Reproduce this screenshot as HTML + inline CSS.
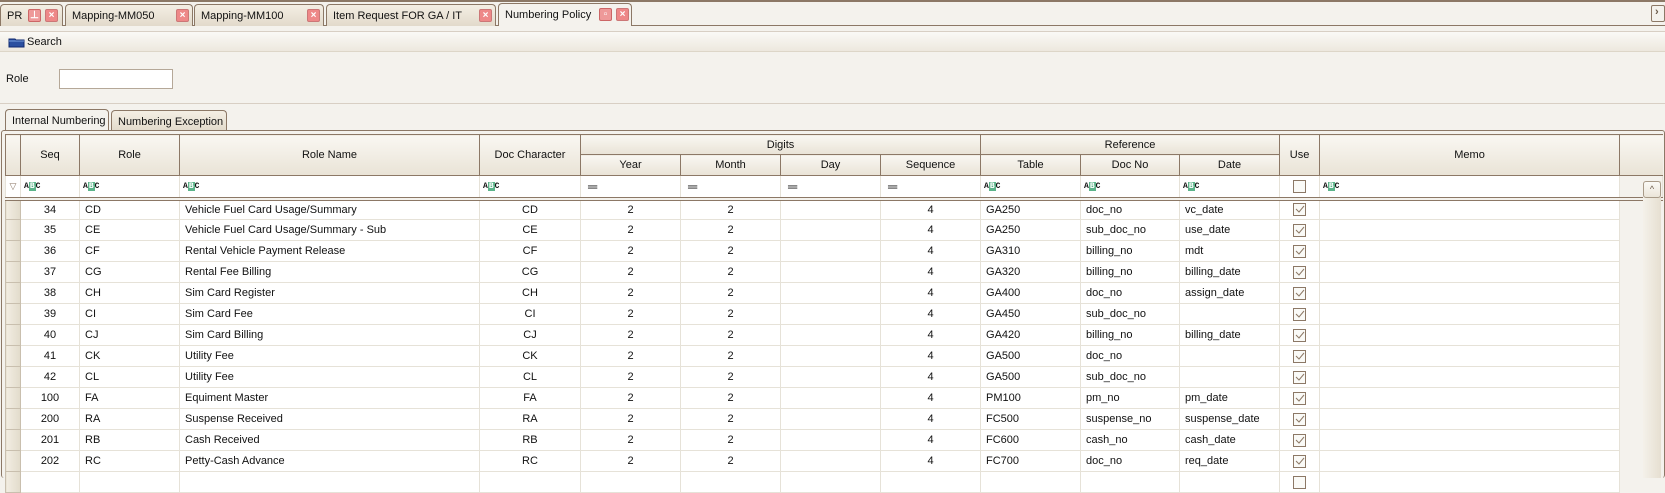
<!DOCTYPE html>
<html><head><meta charset="utf-8">
<style>
*{box-sizing:border-box;margin:0;padding:0}
body{width:1665px;height:478px;overflow:hidden;background:#f4f2ed;font-family:"Liberation Sans",Arial,sans-serif;font-size:11px;color:#111;position:relative}
.abs{position:absolute}
.tab{position:absolute;top:4px;height:22px;border:1px solid #8c7866;border-bottom:none;border-radius:4px 4px 0 0;background:linear-gradient(#f4efe4,#e2dacb);padding:5px 0 0 6px;font-size:11px;white-space:nowrap}
.x{position:absolute;top:4px;width:13px;height:13px;border:1px solid #c77;background:#e88;border-radius:2px;color:#fff;font-size:10px;line-height:11px;text-align:center;font-weight:bold}
table{position:absolute;left:5px;top:134px;border-collapse:collapse;table-layout:fixed;width:1657px}
td,th{border:1px solid #e6e2d8;padding:0;overflow:hidden;white-space:nowrap;font-weight:normal}
th{border:1px solid #8c7866;background:linear-gradient(#f9f7f2,#e9e3d6);text-align:center}
tr.d{height:21px}
tr.d td{background:#fff}
td.rh{background:linear-gradient(90deg,#f2ede2,#e2dbcb)!important;border-color:#c9bfae}
.c{text-align:center}.l{padding-left:5px}
.abc{font-size:8px;font-family:"Liberation Mono",monospace;font-weight:bold;padding-left:3px}
.abc b{background:#5cb48a;color:#fff;padding:0 1px}
.eq{padding-left:7px;font-weight:bold;font-size:13px}
.cb{display:inline-block;width:13px;height:13px;border:1px solid #8c7866;vertical-align:middle;background:#fafaf7}
</style></head><body>
<div class="abs" style="left:0;top:0;width:1665px;height:2px;background:#8c7866"></div>
<div class="abs" style="left:0;top:25px;width:1665px;height:1px;background:#8c7866"></div>
<div class="tab" style="left:0;width:63px">PR<span class="x" style="left:27px;background:#e99;border-color:#c66">⊥</span><span class="x" style="left:44px">×</span></div>
<div class="tab" style="left:65px;width:128px">Mapping-MM050<span class="x" style="left:110px">×</span></div>
<div class="tab" style="left:194px;width:130px">Mapping-MM100<span class="x" style="left:112px">×</span></div>
<div class="tab" style="left:326px;width:170px">Item Request FOR GA / IT<span class="x" style="left:152px">×</span></div>
<div class="tab" style="left:498px;width:134px;height:23px;background:#f4f2ed;top:3px">Numbering Policy<span class="x" style="left:100px;background:#e99;border-color:#c66">▫</span><span class="x" style="left:117px">×</span></div>
<div class="abs" style="left:1651px;top:5px;width:14px;height:17px;border:1px solid #8c7866;border-radius:2px;font-size:11px;font-weight:bold;color:#6a5a4a;padding-left:3px">›</div>
<div class="abs" style="left:0;top:31px;width:1665px;height:1px;background:#d8cfc4"></div>
<div class="abs" style="left:0;top:32px;width:1665px;height:20px;background:linear-gradient(#faf9f6,#ede8de);border-bottom:1px solid #ddd6c8;padding:4px 0 0 27px">Search</div>
<svg class="abs" style="left:8px;top:36px" width="17" height="12"><path d="M1 3h6l1 1h8v7H1z" fill="#2b4fa0" stroke="#102a70"/><path d="M1 5h15" stroke="#7aa0e0"/></svg>
<div class="abs" style="left:6px;top:73px">Role</div>
<div class="abs" style="left:59px;top:69px;width:114px;height:20px;background:#fff;border:1px solid #b5a898"></div>
<div class="abs" style="left:0;top:103px;width:1665px;height:1px;background:#d8cfc4"></div>
<div class="tab" style="left:5px;top:109px;width:104px;height:22px;background:#f4f2ed">Internal Numbering</div>
<div class="tab" style="left:111px;top:110px;width:116px;height:21px">Numbering Exception</div>
<div class="abs" style="left:1px;top:130px;width:1664px;height:348px;border:1px solid #8c7866;border-bottom:none;border-radius:3px"></div>
<table>
<colgroup><col style="width:15px"><col style="width:59px"><col style="width:100px"><col style="width:300px"><col style="width:101px"><col style="width:100px"><col style="width:100px"><col style="width:100px"><col style="width:100px"><col style="width:100px"><col style="width:99px"><col style="width:100px"><col style="width:40px"><col style="width:300px"><col style="width:43px"></colgroup>
<tr style="height:20px"><th rowspan="2"></th><th rowspan="2">Seq</th><th rowspan="2">Role</th><th rowspan="2">Role Name</th><th rowspan="2">Doc Character</th><th colspan="4">Digits</th><th colspan="3">Reference</th><th rowspan="2">Use</th><th rowspan="2">Memo</th><th rowspan="2" style="border-right:none"></th></tr>
<tr style="height:21px"><th>Year</th><th>Month</th><th>Day</th><th>Sequence</th><th>Table</th><th>Doc No</th><th>Date</th></tr>
<tr class="d" style="height:23px;border-bottom:4px double #8c7866"><td style="color:#8c7866;font-size:9px;text-align:center">▽</td><td class="abc">A<b>B</b>C</td><td class="abc">A<b>B</b>C</td><td class="abc">A<b>B</b>C</td><td class="abc">A<b>B</b>C</td><td class="eq">═</td><td class="eq">═</td><td class="eq">═</td><td class="eq">═</td><td class="abc">A<b>B</b>C</td><td class="abc">A<b>B</b>C</td><td class="abc">A<b>B</b>C</td><td class="c"><span class="cb"></span></td><td class="abc">A<b>B</b>C</td><td style="background:#f4f2ed"></td></tr>
<tr class="d"><td class="rh"></td><td class="c">34</td><td class="l">CD</td><td class="l">Vehicle Fuel Card Usage/Summary</td><td class="c">CD</td><td class="c">2</td><td class="c">2</td><td></td><td class="c">4</td><td class="l">GA250</td><td class="l">doc_no</td><td class="l">vc_date</td><td class="c"><span class="cb"><svg width="11" height="11"><path d="M2 5l3 3 5-6" fill="none" stroke="#8c7866"/></svg></span></td><td></td><td style="background:#f4f2ed;border:none"></td></tr>
<tr class="d"><td class="rh"></td><td class="c">35</td><td class="l">CE</td><td class="l">Vehicle Fuel Card Usage/Summary - Sub</td><td class="c">CE</td><td class="c">2</td><td class="c">2</td><td></td><td class="c">4</td><td class="l">GA250</td><td class="l">sub_doc_no</td><td class="l">use_date</td><td class="c"><span class="cb"><svg width="11" height="11"><path d="M2 5l3 3 5-6" fill="none" stroke="#8c7866"/></svg></span></td><td></td><td style="background:#f4f2ed;border:none"></td></tr>
<tr class="d"><td class="rh"></td><td class="c">36</td><td class="l">CF</td><td class="l">Rental Vehicle Payment Release</td><td class="c">CF</td><td class="c">2</td><td class="c">2</td><td></td><td class="c">4</td><td class="l">GA310</td><td class="l">billing_no</td><td class="l">mdt</td><td class="c"><span class="cb"><svg width="11" height="11"><path d="M2 5l3 3 5-6" fill="none" stroke="#8c7866"/></svg></span></td><td></td><td style="background:#f4f2ed;border:none"></td></tr>
<tr class="d"><td class="rh"></td><td class="c">37</td><td class="l">CG</td><td class="l">Rental Fee Billing</td><td class="c">CG</td><td class="c">2</td><td class="c">2</td><td></td><td class="c">4</td><td class="l">GA320</td><td class="l">billing_no</td><td class="l">billing_date</td><td class="c"><span class="cb"><svg width="11" height="11"><path d="M2 5l3 3 5-6" fill="none" stroke="#8c7866"/></svg></span></td><td></td><td style="background:#f4f2ed;border:none"></td></tr>
<tr class="d"><td class="rh"></td><td class="c">38</td><td class="l">CH</td><td class="l">Sim Card Register</td><td class="c">CH</td><td class="c">2</td><td class="c">2</td><td></td><td class="c">4</td><td class="l">GA400</td><td class="l">doc_no</td><td class="l">assign_date</td><td class="c"><span class="cb"><svg width="11" height="11"><path d="M2 5l3 3 5-6" fill="none" stroke="#8c7866"/></svg></span></td><td></td><td style="background:#f4f2ed;border:none"></td></tr>
<tr class="d"><td class="rh"></td><td class="c">39</td><td class="l">CI</td><td class="l">Sim Card Fee</td><td class="c">CI</td><td class="c">2</td><td class="c">2</td><td></td><td class="c">4</td><td class="l">GA450</td><td class="l">sub_doc_no</td><td class="l"></td><td class="c"><span class="cb"><svg width="11" height="11"><path d="M2 5l3 3 5-6" fill="none" stroke="#8c7866"/></svg></span></td><td></td><td style="background:#f4f2ed;border:none"></td></tr>
<tr class="d"><td class="rh"></td><td class="c">40</td><td class="l">CJ</td><td class="l">Sim Card Billing</td><td class="c">CJ</td><td class="c">2</td><td class="c">2</td><td></td><td class="c">4</td><td class="l">GA420</td><td class="l">billing_no</td><td class="l">billing_date</td><td class="c"><span class="cb"><svg width="11" height="11"><path d="M2 5l3 3 5-6" fill="none" stroke="#8c7866"/></svg></span></td><td></td><td style="background:#f4f2ed;border:none"></td></tr>
<tr class="d"><td class="rh"></td><td class="c">41</td><td class="l">CK</td><td class="l">Utility Fee</td><td class="c">CK</td><td class="c">2</td><td class="c">2</td><td></td><td class="c">4</td><td class="l">GA500</td><td class="l">doc_no</td><td class="l"></td><td class="c"><span class="cb"><svg width="11" height="11"><path d="M2 5l3 3 5-6" fill="none" stroke="#8c7866"/></svg></span></td><td></td><td style="background:#f4f2ed;border:none"></td></tr>
<tr class="d"><td class="rh"></td><td class="c">42</td><td class="l">CL</td><td class="l">Utility Fee</td><td class="c">CL</td><td class="c">2</td><td class="c">2</td><td></td><td class="c">4</td><td class="l">GA500</td><td class="l">sub_doc_no</td><td class="l"></td><td class="c"><span class="cb"><svg width="11" height="11"><path d="M2 5l3 3 5-6" fill="none" stroke="#8c7866"/></svg></span></td><td></td><td style="background:#f4f2ed;border:none"></td></tr>
<tr class="d"><td class="rh"></td><td class="c">100</td><td class="l">FA</td><td class="l">Equiment Master</td><td class="c">FA</td><td class="c">2</td><td class="c">2</td><td></td><td class="c">4</td><td class="l">PM100</td><td class="l">pm_no</td><td class="l">pm_date</td><td class="c"><span class="cb"><svg width="11" height="11"><path d="M2 5l3 3 5-6" fill="none" stroke="#8c7866"/></svg></span></td><td></td><td style="background:#f4f2ed;border:none"></td></tr>
<tr class="d"><td class="rh"></td><td class="c">200</td><td class="l">RA</td><td class="l">Suspense Received</td><td class="c">RA</td><td class="c">2</td><td class="c">2</td><td></td><td class="c">4</td><td class="l">FC500</td><td class="l">suspense_no</td><td class="l">suspense_date</td><td class="c"><span class="cb"><svg width="11" height="11"><path d="M2 5l3 3 5-6" fill="none" stroke="#8c7866"/></svg></span></td><td></td><td style="background:#f4f2ed;border:none"></td></tr>
<tr class="d"><td class="rh"></td><td class="c">201</td><td class="l">RB</td><td class="l">Cash Received</td><td class="c">RB</td><td class="c">2</td><td class="c">2</td><td></td><td class="c">4</td><td class="l">FC600</td><td class="l">cash_no</td><td class="l">cash_date</td><td class="c"><span class="cb"><svg width="11" height="11"><path d="M2 5l3 3 5-6" fill="none" stroke="#8c7866"/></svg></span></td><td></td><td style="background:#f4f2ed;border:none"></td></tr>
<tr class="d"><td class="rh"></td><td class="c">202</td><td class="l">RC</td><td class="l">Petty-Cash Advance</td><td class="c">RC</td><td class="c">2</td><td class="c">2</td><td></td><td class="c">4</td><td class="l">FC700</td><td class="l">doc_no</td><td class="l">req_date</td><td class="c"><span class="cb"><svg width="11" height="11"><path d="M2 5l3 3 5-6" fill="none" stroke="#8c7866"/></svg></span></td><td></td><td style="background:#f4f2ed;border:none"></td></tr>
<tr class="d"><td class="rh"></td><td></td><td></td><td></td><td></td><td></td><td></td><td></td><td></td><td></td><td></td><td></td><td class="c"><span class="cb"></span></td><td></td><td style="background:#f4f2ed;border:none"></td></tr>
</table>
<div class="abs" style="left:1643px;top:181px;width:18px;height:297px;background:linear-gradient(90deg,#f4f1ea,#e6dfd1)"></div>
<div class="abs" style="left:1643px;top:181px;width:18px;height:17px;border:1px solid #a89a88;border-radius:3px;background:linear-gradient(#fbfaf6,#ebe5d9);text-align:center;font-size:9px;color:#6a5a4a;line-height:14px">^</div>
</body></html>
